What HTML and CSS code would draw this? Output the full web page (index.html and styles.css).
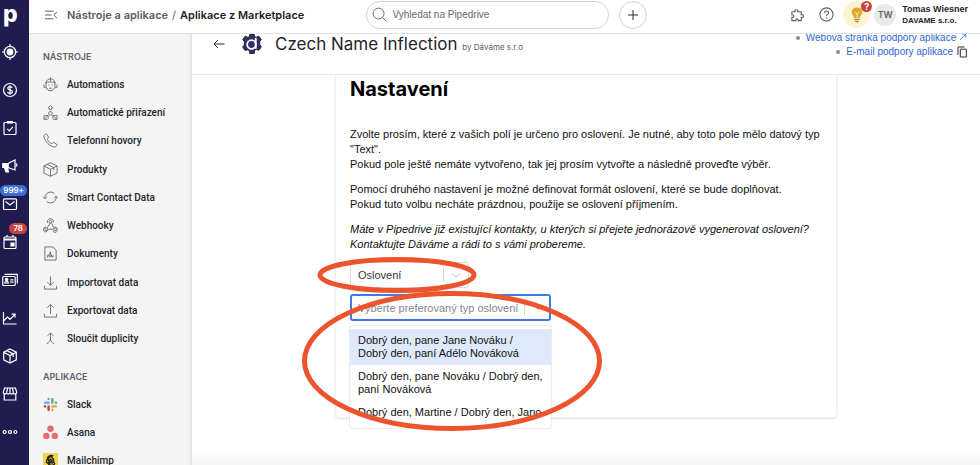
FILE: index.html
```
<!DOCTYPE html>
<html lang="cs">
<head>
<meta charset="UTF-8">
<meta name="viewport" content="width=device-width, initial-scale=1.0">
<title>Czech Name Inflection</title>
<link rel="stylesheet" href="styles.css">
</head>
<body>

<nav class="rail" aria-label="Pipedrive">
    <a class="logo" href="#">p</a>
    <a href="#" aria-label="Leady"><svg viewBox="0 0 16 16"><circle cx="8" cy="8" r="5.7"/><circle cx="8" cy="8" r="2.8" class="solid"/><path d="M8 0v2.500M8 13.500v2.500M0 8h2.500M13.500 8H16"/></svg></a>
    <a href="#" aria-label="Obchody"><svg viewBox="0 0 16 16"><circle cx="8" cy="8" r="6.500"/><path d="M10.300 5.900c-.3-.9-1.200-1.300-2.300-1.300-1.300 0-2.200.6-2.200 1.600 0 2.400 4.600 1.100 4.600 3.600 0 1-1 1.600-2.400 1.600-1.300 0-2.200-.6-2.400-1.500M8 3.300v9.400"/></svg></a>
    <a href="#" aria-label="Projekty"><svg viewBox="0 0 16 16"><rect x="2" y="2.500" width="12" height="12" rx="1"/><path d="M5 2.300h6" stroke-width="2.600"/><path d="M5.300 8.800l2 2 3.600-4"/></svg></a>
    <a href="#" aria-label="Kampaně"><svg viewBox="0 0 16 16"><path d="M6 5.500l7-3.500v10L6 9.500z"/><path d="M.8 5.500H6v4H.8zM2.500 9.500h3l1 4.500h-2.500z" class="solid"/><path d="M13.500 5.500c2 .5 2 2.500 0 3"/></svg></a>
    <a href="#" aria-label="E-mail"><svg viewBox="0 0 16 16"><rect x="1.500" y="2.800" width="13" height="10.700" rx="1"/><path d="M3.500 5.500L8 9l4.500-3.500"/></svg><span class="badge badge-blue">999+</span></a>
    <a href="#" aria-label="Aktivity"><svg viewBox="0 0 16 16"><rect x="2" y="3" width="12" height="11.500" rx="1"/><path d="M2 5.500h12" stroke-width="2"/><path d="M5 1v2M11 1v2"/><path d="M9 9h3v3H9z" class="solid"/></svg><span class="badge badge-red">78</span></a>
    <a href="#" aria-label="Kontakty"><svg viewBox="0 0 16 16"><rect x="0.700" y="4.500" width="12.500" height="9" rx="1"/><path d="M2.500 2.300h12.800v9.200M2.700 11c.2-2 3.600-2 3.800 0z"/><circle cx="4.600" cy="7.600" r="1.200" class="solid"/><path d="M8.200 7.800h3.200M8.200 10.200h3.200"/></svg></a>
    <a href="#" aria-label="Přehledy"><svg viewBox="0 0 16 16"><path d="M1.500 2v12h13M2 10.500l3.500-3.500L8 9.300l5-5M9.700 4.200H13v3.300"/></svg></a>
    <a href="#" aria-label="Produkty"><svg viewBox="0 0 16 16"><path d="M8 1l6.300 3.200v7.600L8 15l-6.300-3.200V4.200zM1.700 4.200L8 7.500l6.300-3.300M8 7.500V15M4.800 2.600l6.400 3.300v3"/></svg></a>
    <a href="#" aria-label="Marketplace"><svg viewBox="0 0 16 16"><path d="M2.500 2h11l1.200 4.300c0 2.300-3.300 2.300-3.300 0 0 2.300-3.400 2.300-3.400 0 0 2.300-3.400 2.300-3.400 0 0 2.300-3.300 2.300-3.300 0zM2.200 8v6h11.600V8M5.700 2l-1 4M8 2v4M10.300 2l1 4"/></svg></a>
    <a href="#" aria-label="Více"><svg viewBox="0 0 16 16"><circle cx="2.600" cy="8" r="1.500"/><circle cx="8" cy="8" r="1.500"/><circle cx="13.400" cy="8" r="1.500"/></svg></a>
</nav>

<div class="page">
    <header class="topbar">
        <div class="crumbs">
            <button class="icon-button" aria-label="Sbalit menu"><svg class="menu-icon" viewBox="0 0 14 10"><path d="M1 1.200h8.500M1 5h6.500M1 8.800h8.500M13 1.800L9.800 5 13 8.200"/></svg></button>
            <a href="#">Nástroje a aplikace</a>
            <span class="slash">/</span>
            <strong>Aplikace z Marketplace</strong>
        </div>
        <div class="search-group">
            <label class="search">
                <svg viewBox="0 0 16 16"><circle cx="7" cy="7" r="5.800"/><path d="M11.300 11.300l3.700 3.700"/></svg>
                <input type="text" placeholder="Vyhledat na Pipedrive" aria-label="Vyhledat na Pipedrive">
            </label>
            <button class="add" aria-label="Přidat"><svg viewBox="0 0 10 10"><path d="M5 0v10M0 5h10"/></svg></button>
        </div>
        <div class="account">
            <button class="icon-button" aria-label="Doplňky"><svg class="tool-icon" viewBox="0 0 16 16"><path d="M2 5h3.300c-1-2.800 4-2.800 3 0H12v3.300c3.300-1 3.300 3.700 0 2.700v3.500H8.700c.7-2.400-3-2.400-2.400 0H2V11c2.700.6 2.700-3.300 0-2.700z"/></svg></button>
            <button class="icon-button" aria-label="Nápověda"><svg class="tool-icon" viewBox="0 0 16 16"><circle cx="8" cy="8" r="7"/><path d="M5.900 6.300c0-2.700 4.300-2.700 4.300 0C10.200 7.800 8 7.900 8 9.600M8 11v1.200"/></svg></button>
            <button class="tips" aria-label="Tipy"><svg viewBox="0 0 16 20"><path d="M8 1.500c-7 0-7.500 7-3.700 10v2.300h7.400v-2.300c3.800-3 3.300-10-3.700-10z" fill="#e3a62d" stroke="none"/><path d="M5 15.300h6M6 17.500h4" stroke="#a57f3c" stroke-width="1.500"/><path d="M5.500 6.500L8 9l2.500-2.500M8 9v4" stroke="#fff3cf"/></svg><span class="tips-badge">?</span></button>
            <span class="avatar">TW</span>
            <div class="user">Tomas Wiesner<small>DAVAME s.r.o.</small></div>
        </div>
    </header>

    <div class="body">
        <aside class="sidebar">
            <h2>NÁSTROJE</h2>
            <ul class="tools">
                <li><a href="#"><svg viewBox="0 0 16 16"><path d="M3.300 6.500v4.500L6 14.500h4l2.700-3.500V6.500M2 6.500c3-1.700 9-1.700 12 0M3.500 5.500C4 .8 12 .8 12.500 5.500M8 .5v3.700M1 8v3l2 .5M15 8v3l-2 .5M5.700 8.500h1M9.300 8.500h1M6.500 12h3"/></svg>Automations</a></li>
                <li><a href="#"><svg viewBox="0 0 16 16"><path d="M8 .5L10.500 3H9.300v2H6.700V3H5.500zM1 11.300h4.500v3.500M1 11.300v4h4M1.500 15l3.500-3.500M15 11.300h-4.500v3.500M15 11.300v4h-4M14.500 15L11 11.500"/><circle cx="8" cy="9" r="2"/></svg>Automatické přiřazení</a></li>
                <li><a href="#"><svg viewBox="0 0 16 16"><path d="M2.500 1.200L1 3c-.4 5 7 12.300 12 12l1.800-1.700c.3-.6.2-1-.2-1.300l-2.800-1.800c-1.400-.3-1.500 1.600-2.800 1-2-.8-3.800-2.600-4.400-4.400-.2-1.100 1.400-1.200 1.200-2.600L4 1.300c-.4-.5-1-.5-1.500-.1z"/></svg>Telefonní hovory</a></li>
                <li><a href="#"><svg viewBox="0 0 16 16"><path d="M8 .8l7 3.400v7.600l-7 3.400-7-3.400V4.200zM1 4.200l7 3.600 7-3.600M8 7.800v7.400M4.500 2.500l7 3.600v2.800"/></svg>Produkty</a></li>
                <li><a href="#"><svg viewBox="0 0 16 16"><path d="M2 9C1.700 5 5 1.500 9.500 2.300l2.500 1.200M.3 7.200L2 9.300l2-1.800M14 7c.5 4-3 7.500-7.500 6.700L4 12.500M15.700 8.800L14 6.700l-2 1.800"/></svg>Smart Contact Data</a></li>
                <li><a href="#"><svg viewBox="0 0 16 16"><circle cx="8" cy="4" r="1.500"/><circle cx="3.300" cy="12" r="1.500"/><circle cx="12.700" cy="12" r="1.500"/><path d="M5 5.500C3.800 2.300 6.200.6 8 .7s3.800 1.800 3 4M7.500 5.500l-3 5M9 5.500l2.500 4.500c3.500-1 4.500 2 3.500 4s-4 1.500-4.300 0M11 12H5c0 4-5 3.500-4.500 0 .3-1.700 1.500-2.500 2.700-2.300"/></svg>Webhooky</a></li>
                <li><a href="#"><svg viewBox="0 0 16 16"><path d="M2 1h8.500L14 4.500V15H2zM4.500 12c2-.8 3-6 3.500-5.800.8.400-1.200 5.600-.8 5.800.6.200 1.300-3 1.900-2.800.5.200-.2 2.500.3 2.700.5.100 1-1.700 1.500-1.600.3.100 0 1.500.6 1.500M4.500 12l1-3"/></svg>Dokumenty</a></li>
                <li><a href="#"><svg viewBox="0 0 16 16"><path d="M8 1.500v9.300M4.500 7.500L8 11l3.500-3.500M1.500 11.500V15h13v-3.500"/></svg>Importovat data</a></li>
                <li><a href="#"><svg viewBox="0 0 16 16"><path d="M8 11.500V1.500M4.500 5L8 1.500 11.500 5M1.500 11.500V15h13v-3.500"/></svg>Exportovat data</a></li>
                <li><a href="#"><svg viewBox="0 0 16 16"><path d="M8 8V2.500M5 5l3-3 3 3M8 7.500c0 3.500-1.500 5-4 6M8 7.500c0 3.500 1.500 5 4 6"/></svg>Sloučit duplicity</a></li>
            </ul>
            <h2 class="apps-title">APLIKACE</h2>
            <ul class="apps">
                <li><a href="#"><svg viewBox="0 0 16 16" stroke-width="2.600" stroke-linecap="round"><path d="M6 2.200V2M2.300 6H6" stroke="#6f9eea"/><path d="M10 2.300V6M13.700 6h.2" stroke="#62a57e"/><path d="M6 10v3.700M2 10h.3" stroke="#c54143"/><path d="M10 10h3.700M10 13.700v.2" stroke="#e0a63d"/></svg>Slack</a></li>
                <li><a href="#"><svg viewBox="0 0 16 16"><g fill="#e66b6d" stroke="none"><circle cx="8" cy="4" r="3.400"/><circle cx="3.500" cy="11.600" r="3.400"/><circle cx="12.500" cy="11.600" r="3.400"/></g></svg>Asana</a></li>
                <li><a href="#"><svg viewBox="0 0 16 16"><path d="M0 0h16v16H0z" fill="#f4d64e" stroke="none"/><path d="M4 6.500C4 3 8 .7 11.500 2.500L10 4.300l2 2.200v3l1.300 1.200c-.5 2.500-2.300 4-4.800 4-2 0-3-1.500-3.500-3.200-2.700-.3-2.600-3.700-1-5z" fill="#2d2817" stroke="none"/><path d="M6.500 6.500l2-1.500 1.500 2M8 8.500h.5M10.300 8.300h.4M7.500 11.500c1.500.8 3 .4 4-.5M4.200 8.300c1-.2 1 .8.500 1.500" stroke="#f4d64e"/></svg>Mailchimp</a></li>
            </ul>
        </aside>

        <main class="main">
            <section class="app-head">
                <button class="icon-button" aria-label="Zpět"><svg class="back-icon" viewBox="0 0 12 10"><path d="M11.500 5H1M5 1L1 5l4 4"/></svg></button>
                <svg class="app-logo" viewBox="0 0 20 20"><path d="M8 0h4l.6 2.700 1.500.7 2.500-1.300 2.700 3.400-1.600 2v3.200l1.700 2-2.500 3.500-2.700-.8-1.600.8L12 20H8l-.7-3.500-1.600-.8-2.600.8L.6 13l1.800-2.100V7.600L.7 5.500l2.700-3.400 2.500 1.300 1.500-.7z" fill="#322d6b"/><circle cx="9.500" cy="10.500" r="4.300" fill="#322d6b" stroke="#fff" stroke-width="1.800"/><path d="M13.800 4v10.800" stroke="#fff" stroke-width="1.800"/></svg>
                <h1>Czech Name Inflection <small>by Dáváme s.r.o</small></h1>
                <ul class="support">
                    <li><a href="#">Webová stránka podpory aplikace <svg viewBox="0 0 10 10"><path d="M1.500 8.500l7-7M4 1.500h4.500V6"/></svg></a></li>
                    <li><a href="#">E-mail podpory aplikace</a> <button class="icon-button" aria-label="Kopírovat"><svg class="copy-icon" viewBox="0 0 10 12"><path d="M1 9V1h6.500M3.300 3.200H9.300V11H3.300z"/></svg></button></li>
                </ul>
            </section>

            <section class="card">
                <h2>Nastavení</h2>
                <p>Zvolte prosím, které z vašich polí je určeno pro oslovení. Je nutné, aby toto pole mělo datový typ "Text".<br>Pokud pole ještě nemáte vytvořeno, tak jej prosím vytvořte a následně proveďte výběr.</p>
                <p>Pomocí druhého nastavení je možné definovat formát oslovení, které se bude doplňovat.<br>Pokud tuto volbu necháte prázdnou, použije se oslovení příjmením.</p>
                <p><em>Máte v Pipedrive již existující kontakty, u kterých si přejete jednorázově vygenerovat oslovení? Kontaktujte Dáváme a rádi to s vámi probereme.</em></p>
                <form class="fields">
                    <div class="picker picker-field">
                        <select aria-label="Pole pro oslovení"><option>Oslovení</option></select>
                        <svg viewBox="0 0 10 6"><path d="M1 1l4 4 4-4"/></svg>
                    </div>
                    <div class="picker picker-type">
                        <select aria-label="Typ oslovení"><option>Vyberte preferovaný typ oslovení</option></select>
                        <svg viewBox="0 0 10 6"><path d="M1 1l4 4 4-4"/></svg>
                        <ul class="menu" role="listbox" aria-label="Typ oslovení">
                            <li class="active" role="option" aria-selected="true">Dobrý den, pane Jane Nováku /<br>Dobrý den, paní Adélo Nováková</li>
                            <li role="option" aria-selected="false">Dobrý den, pane Nováku / Dobrý den, paní Nováková</li>
                            <li role="option" aria-selected="false">Dobrý den, Martine / Dobrý den, Jano</li>
                        </ul>
                    </div>
                    <!-- red rings drawn over the two fields -->
                    <svg class="rings" viewBox="0 0 304 178"><ellipse cx="97" cy="20" rx="77" ry="15.500"/><ellipse cx="152" cy="106" rx="147.500" ry="67.500"/></svg>
                </form>
            </section>
        </main>
    </div>
</div>

</body>
</html>
```

FILE: styles.css
```
* {
    box-sizing: border-box;
}

body {
    display: flex;
    height: 100vh;
    margin: 0;
    overflow: hidden;
    background: #fff;
    color: #23242a;
    font-family: Inter, "Liberation Sans", sans-serif;
    font-size: 10px;
}

ul {
    margin: 0;
    padding: 0;
    list-style: none;
}

a {
    color: inherit;
    text-decoration: none;
}

button {
    padding: 0;
    border: 0;
    background: none;
    font-family: inherit;
}

svg {
    display: block;
    flex: none;
    fill: none;
    stroke: currentColor;
}

/* left rail */
.rail {
    flex: none;
    width: 29px;
    background: #211c50;
    color: #fff;
}

.rail a {
    position: relative;
    display: flex;
    align-items: center;
    height: 38px;
    padding-left: 2px;
}

.rail svg {
    width: 16px;
    height: 16px;
    stroke-width: 1.2;
}

.rail .solid {
    fill: currentColor;
}

.rail .logo {
    height: 33px;
    padding: 0 0 6px 3px;
    font-size: 23px;
    font-weight: 800;
    line-height: 28px;
}

.badge {
    position: absolute;
    top: 0;
    right: 2px;
    height: 11px;
    padding: 0 4px;
    border-radius: 6px;
    font-size: 8px;
    font-weight: 600;
    line-height: 11px;
}

.badge-blue {
    padding: 0 3px;
    background: #3c70d2;
}

.badge-red {
    background: #c8453f;
}

/* top bar */
.page {
    display: flex;
    flex: 1;
    flex-direction: column;
    min-width: 0;
}

.topbar {
    position: relative;
    z-index: 2;
    display: grid;
    flex: none;
    grid-template-columns: 1fr auto 1fr;
    align-items: center;
    height: 34px;
    padding: 0 12px 4px 15px;
    border-bottom: 1px solid #e2e2e3;
    background: #fff;
}

.crumbs {
    display: flex;
    align-items: center;
    gap: 4px;
    color: #5c5d65;
    font-size: 11px;
    font-weight: 600;
    white-space: nowrap;
}

.crumbs .icon-button {
    margin-right: 5px;
}

.crumbs strong {
    color: #1f2026;
    font-weight: 600;
}

.slash {
    font-weight: 400;
}

.icon-button {
    color: #5f6067;
}

.menu-icon {
    width: 14px;
    height: 10px;
}

.search-group {
    display: flex;
    gap: 10px;
}

.search {
    display: flex;
    align-items: center;
    gap: 6px;
    width: 243px;
    height: 28px;
    padding: 0 5px;
    border: 1px solid #d3d3d5;
    border-radius: 14px;
    color: #606168;
}

.search svg {
    width: 15px;
    height: 15px;
}

.search input {
    flex: 1;
    min-width: 0;
    padding: 0;
    border: 0;
    outline: 0;
    background: none;
    font-family: "Liberation Sans", sans-serif;
    font-size: 10px;
}

.search input::placeholder {
    color: #66676d;
}

.add {
    display: grid;
    place-items: center;
    width: 28px;
    height: 28px;
    border: 1px solid #d3d3d5;
    border-radius: 50%;
    color: #303137;
}

.add svg {
    width: 10px;
    height: 10px;
}

.account {
    display: flex;
    align-items: center;
    justify-content: flex-end;
}

.tool-icon {
    width: 15px;
    height: 15px;
    margin-right: 14px;
    stroke-width: 1.2;
}

.tips {
    position: relative;
    display: grid;
    place-items: center;
    width: 27px;
    height: 27px;
    margin: 0 4px 0 -5px;
    border-radius: 50%;
    background: #fff3d2;
}

.tips svg {
    width: 14px;
    height: 18px;
}

.tips-badge {
    position: absolute;
    top: 0;
    right: -2px;
    width: 11px;
    height: 11px;
    border-radius: 50%;
    background: #c8453f;
    color: #fff;
    font-size: 9px;
    font-weight: 700;
    line-height: 11px;
}

.avatar {
    width: 22px;
    height: 22px;
    border-radius: 50%;
    background: #e9e9ea;
    color: #65666c;
    font-size: 9px;
    font-weight: 600;
    line-height: 22px;
    text-align: center;
}

.user {
    margin-left: 6px;
    font-family: "Liberation Sans", sans-serif;
    font-size: 9px;
    font-weight: 700;
    line-height: 12px;
    white-space: nowrap;
}

.user small {
    display: block;
    font-size: 8px;
}

/* sidebar */
.body {
    display: flex;
    flex: 1;
    min-height: 0;
}

.sidebar {
    flex: none;
    width: 163px;
    padding: 15px 0 0 14px;
    border-right: 2px solid #e6e6e7;
    background: #f4f4f5;
    overflow: hidden;
}

.sidebar h2 {
    margin: 0 0 6px;
    color: #606168;
    font-size: 9px;
    font-weight: 600;
    line-height: 15px;
}

.tools {
    display: grid;
    grid-template-rows: repeat(10, 1fr);
    height: 283px;
}

.sidebar .apps-title {
    margin-top: 16px;
}

.apps li {
    height: 28px;
}

.sidebar a {
    display: flex;
    align-items: center;
    gap: 9px;
    height: 100%;
    font-family: Roboto, sans-serif;
    font-weight: 500;
}

.sidebar a svg {
    width: 15px;
    height: 15px;
}

.tools svg {
    color: #6b6c72;
}

/* application header */
.main {
    flex: 1;
    min-width: 0;
    overflow: hidden;
    background: linear-gradient(#fff, #f5f5f5) bottom / 100% 16px no-repeat;
}

.app-head {
    position: relative;
    z-index: 1;
    display: flex;
    align-items: center;
    height: 61px;
    margin-top: -20px;
    padding: 0 13px 0 21px;
    border-bottom: 1px solid #e6e6e7;
    background: #fff;
}

.back-icon {
    width: 12px;
    height: 10px;
    color: #303137;
}

.app-logo {
    width: 20px;
    height: 20px;
    margin: 0 13px 0 17px;
}

.app-head h1 {
    flex: 1;
    margin: 0;
    font-size: 17px;
    font-weight: 400;
    white-space: nowrap;
}

.app-head small {
    color: #5c5d65;
    font-size: 8px;
}

.support {
    padding-top: 2px;
    color: #2f66cf;
    font-family: "Liberation Sans", sans-serif;
    line-height: 14px;
}

.support li {
    display: flex;
    align-items: center;
    justify-content: flex-end;
    gap: 4px;
}

.support li::before {
    width: 4px;
    height: 4px;
    margin-right: 2px;
    border-radius: 50%;
    background: #8a8b90;
    content: "";
}

.support a svg {
    display: inline-block;
    width: 8px;
    height: 8px;
}

.copy-icon {
    width: 10px;
    height: 12px;
    color: #303137;
}

/* settings card */
.card {
    width: 502px;
    max-width: 100%;
    margin: -10px auto 0;
    padding: 10px 14px 96px;
    border: 1px solid #f0f0f1;
    border-radius: 4px;
    box-shadow: 0 1px 2px #e4e4e5;
    color: #111;
    font-family: "Liberation Sans", sans-serif;
    font-size: 11px;
    line-height: 15px;
}

.card h2 {
    margin: 0 0 25px;
    color: #000;
    font-family: Inter, sans-serif;
    font-size: 20px;
    font-weight: 700;
    line-height: 26px;
}

.card p {
    margin: 0 0 10px;
}

.fields {
    position: relative;
    display: flex;
    flex-direction: column;
    align-items: flex-start;
    gap: 6px;
}

.picker {
    position: relative;
}

.picker select {
    display: block;
    width: 100%;
    height: 26px;
    padding: 0 7px;
    border: 1px solid #dcdcde;
    border-radius: 3px;
    outline: 0;
    appearance: none;
    background: linear-gradient(#d5d5d7, #d5d5d7) right 24px center / 1px 14px no-repeat #fff;
    color: #35363b;
    font-family: inherit;
    font-size: 11px;
}

.picker > svg {
    position: absolute;
    top: 11px;
    right: 9px;
    width: 8px;
    height: 5px;
    color: #b5b5b8;
}

.picker-field {
    width: 119px;
}

.picker-type {
    width: 201px;
}

.picker-type select {
    height: 27px;
    padding: 0 6px;
    border: 2px solid #3f7be8;
    color: #85868b;
}

.picker-type > svg {
    color: #55565b;
}

.menu {
    position: absolute;
    top: 32px;
    left: 0;
    width: 100%;
    height: 102px;
    padding-top: 3px;
    border-radius: 3px;
    background: #fff;
    box-shadow: 0 0 2px #b9b9bc;
    line-height: 13px;
}

.menu li {
    padding: 5px 8px;
}

.menu .active {
    background: #dfe9fc;
}

.rings {
    position: absolute;
    top: -7px;
    left: -50px;
    width: 304px;
    height: 178px;
    stroke: #ed532c;
    stroke-width: 5;
    pointer-events: none;
}
```
